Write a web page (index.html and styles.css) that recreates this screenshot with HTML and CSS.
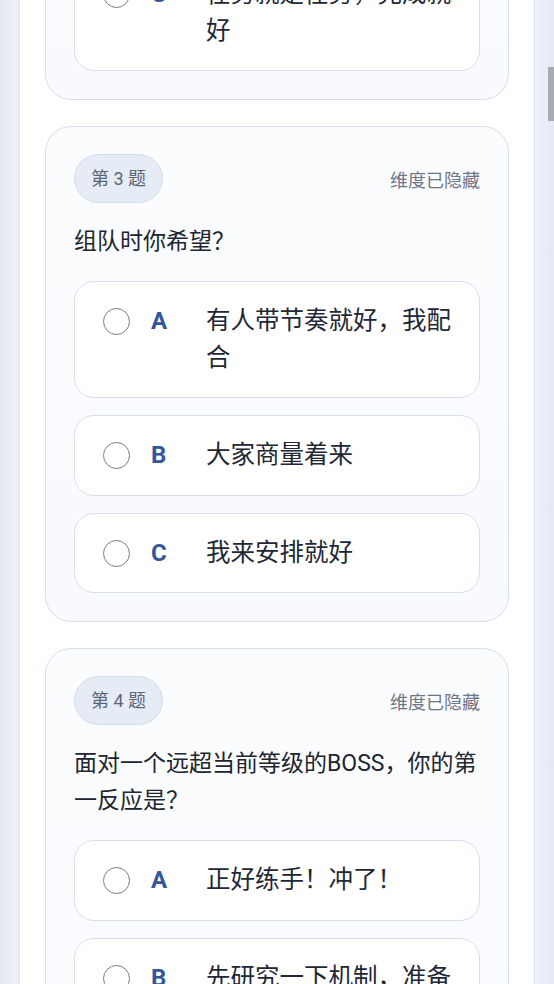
FILE: index.html
```html
<!DOCTYPE html>
<html lang="zh-CN">
<head>
    <meta charset="UTF-8">
    <meta name="viewport" content="width=device-width, initial-scale=1.0">
    <title>性格测试</title>
    <link rel="stylesheet" href="styles.css">
</head>
<body>
    <div class="panel">
        <div class="list">

            <!-- 第 2 题，已滚出顶部 -->
            <div class="card is-cut">
                <div class="options">
                    <label class="option">
                        <span class="radio"></span>
                        <span class="letter">C</span>
                        <span class="option-text">任务就是任务，完成就好</span>
                    </label>
                </div>
            </div>

            <div class="card">
                <div class="card-head">
                    <span class="tag">第 3 题</span>
                    <span class="hint">维度已隐藏</span>
                </div>
                <p class="question">组队时你希望？</p>
                <div class="options">
                    <label class="option">
                        <span class="radio"></span>
                        <span class="letter">A</span>
                        <span class="option-text">有人带节奏就好，我配合</span>
                    </label>
                    <label class="option">
                        <span class="radio"></span>
                        <span class="letter">B</span>
                        <span class="option-text">大家商量着来</span>
                    </label>
                    <label class="option">
                        <span class="radio"></span>
                        <span class="letter">C</span>
                        <span class="option-text">我来安排就好</span>
                    </label>
                </div>
            </div>

            <div class="card">
                <div class="card-head">
                    <span class="tag">第 4 题</span>
                    <span class="hint">维度已隐藏</span>
                </div>
                <p class="question">面对一个远超当前等级的BOSS，你的第一反应是？</p>
                <div class="options">
                    <label class="option">
                        <span class="radio"></span>
                        <span class="letter">A</span>
                        <span class="option-text">正好练手！冲了！</span>
                    </label>
                    <label class="option">
                        <span class="radio"></span>
                        <span class="letter">B</span>
                        <span class="option-text">先研究一下机制，准备好再打</span>
                    </label>
                    <label class="option">
                        <span class="radio"></span>
                        <span class="letter">C</span>
                        <span class="option-text">先去练级，稳一点</span>
                    </label>
                </div>
            </div>

        </div>
    </div>
    <div class="scroll-thumb"></div>
</body>
</html>
```

FILE: styles.css
```css
html, body{
    margin: 0;
    height: 100%;
    overflow: hidden;
}
body{
    font-family: Roboto, "Noto Sans CJK SC", sans-serif;
    color: #232838;
    background: linear-gradient(90deg, #e4e9f4 0%, #edf1f9 3.4%, #edf1f9 96.6%, #e4e9f4 100%);
}

.panel{
    margin: 0 19px;
    min-height: 100%;
    background: #fff;
    border-left: 1px solid #dde3ef;
    border-right: 1px solid #dde3ef;
}
.list{
    display: flex;
    flex-direction: column;
    gap: 26px;
    padding: 0 25px;
}

.card{
    border: 1px solid #d6deeb;
    border-radius: 26px;
    padding: 27px 28px 28px;
    background: linear-gradient(180deg, #fbfcfe 0%, #f8fafd 100%);
}
/* 页面已向下滚动，上一题只露出底部 */
.card.is-cut{
    margin-top: -74px;
}

.card-head{
    display: flex;
    justify-content: space-between;
    align-items: center;
}
.tag{
    padding: 11px 16px;
    font-size: 18px;
    line-height: 25px;
    color: #5c6679;
    background: #e6ecf6;
    border: 1px solid #d3dcea;
    border-radius: 999px;
}
.hint{
    font-size: 18px;
    color: #6d7586;
}

.question{
    margin: 20px 0 21px;
    font-size: 23px;
    line-height: 37px;
    color: #20252f;
}

.options{
    display: flex;
    flex-direction: column;
    gap: 17px;
}
.option{
    display: grid;
    grid-template-columns: 27px 34px 1fr;
    column-gap: 21px;
    align-items: start;
    padding: 21px 22px 21px 28px;
    background: #fff;
    border: 1px solid #d6deeb;
    border-radius: 20px;
}
.radio{
    box-sizing: border-box;
    width: 27px;
    height: 27px;
    margin-top: 5px;
    border: 1.5px solid #7b7b7b;
    border-radius: 50%;
    background: #fff;
}
.letter{
    font-size: 24px;
    font-weight: 700;
    line-height: 36.5px;
    color: #34579b;
}
.option-text{
    font-size: 24.5px;
    line-height: 36.5px;
    color: #222736;
}

.scroll-thumb{
    position: fixed;
    top: 67px;
    right: 0;
    width: 6px;
    height: 54px;
    background: #a9abb2;
}
```
